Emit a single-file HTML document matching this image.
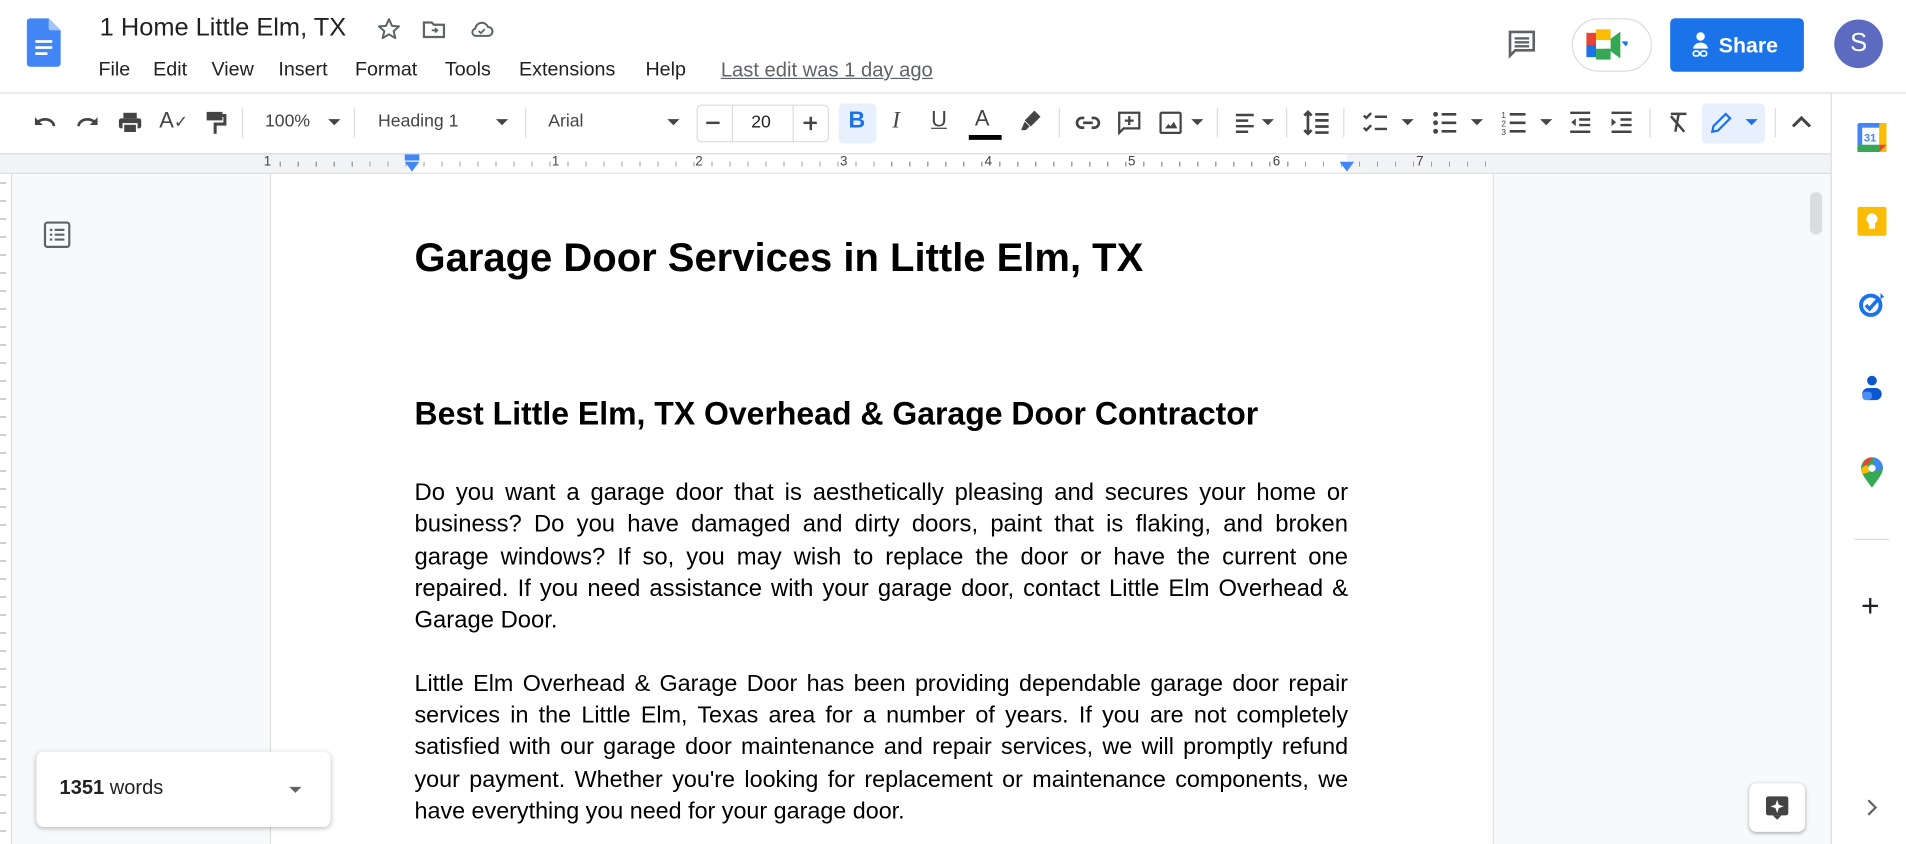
<!DOCTYPE html>
<html><head><meta charset="utf-8">
<style>
*{box-sizing:border-box;margin:0;padding:0}
html,body{width:1906px;height:844px;overflow:hidden;background:#fff}
#w{position:absolute;left:0;top:0;width:1568px;height:694px;transform:scale(1.21556,1.21614);transform-origin:0 0;font-family:"Liberation Sans",Arial,sans-serif;color:#202124;overflow:hidden}
.a{position:absolute}
.menu span{position:absolute;top:48px;font-size:16.2px;color:#202124}
.tb{position:absolute;top:77px;left:0;width:1506px;height:49px;background:#fff}
.ic{position:absolute;top:89px}
.sep{position:absolute;top:89px;width:1px;height:24px;background:#dadce0}
.car{position:absolute;top:98px;width:0;height:0;border-left:5px solid transparent;border-right:5px solid transparent;border-top:5px solid #444}
.tt{position:absolute;top:92px;font-size:14.5px;color:#444}
p.b{font-size:19.2px;line-height:26.3px;text-align:justify;color:#000}
</style></head><body><div id="w">
<!-- header -->
<svg class="a" style="left:22px;top:15px" width="28" height="40" viewBox="0 0 28 40"><path d="M3 0h15l10 10v27a3 3 0 0 1-3 3H3a3 3 0 0 1-3-3V3a3 3 0 0 1 3-3z" fill="#4285f4"/><path d="M18 0v8a2 2 0 0 0 2 2h8z" fill="#a1c2fa"/><rect x="7" y="18" width="14" height="2.2" fill="#fff"/><rect x="7" y="23" width="14" height="2.2" fill="#fff"/><rect x="7" y="28" width="10" height="2.2" fill="#fff"/></svg>
<div class="a" style="left:82px;top:11px;font-size:20.9px;color:#202124">1 Home Little Elm, TX</div>
<svg class="a" style="left:309px;top:13px" width="22" height="22" viewBox="0 0 24 24"><path d="M12 3l2.7 6 6.3.5-4.8 4.2 1.5 6.3L12 16.6 6.3 20l1.5-6.3L3 9.5 9.3 9z" fill="none" stroke="#5f6368" stroke-width="1.8" stroke-linejoin="round"/></svg>
<svg class="a" style="left:346px;top:13px" width="22" height="22" viewBox="0 0 24 24"><path d="M3 6h7l2 2h9v11H3z" fill="none" stroke="#5f6368" stroke-width="2"/><path d="M10 13h5m-2-2l2 2-2 2" stroke="#5f6368" stroke-width="1.6" fill="none"/></svg>
<svg class="a" style="left:385px;top:13px" width="22" height="22" viewBox="0 0 24 24"><path d="M7 18h11a4 4 0 0 0 0-8 6 6 0 0 0-11.5 1.5A3.3 3.3 0 0 0 7 18z" fill="none" stroke="#5f6368" stroke-width="1.8"/><path d="M9.5 13.5l2 2 3.5-3.5" fill="none" stroke="#5f6368" stroke-width="1.6"/></svg>
<div class="menu"><span style="left:81px">File</span><span style="left:126px">Edit</span><span style="left:174px">View</span><span style="left:229px">Insert</span><span style="left:292px">Format</span><span style="left:366px">Tools</span><span style="left:427px">Extensions</span><span style="left:531px">Help</span><span style="left:593px;color:#5f6368;text-decoration:underline;font-size:16.6px">Last edit was 1 day ago</span></div>
<svg class="a" style="left:1239px;top:23px" width="26" height="26" viewBox="0 0 24 24"><path d="M3 3h18v14H7l-4 4z" fill="none" stroke="#5f6368" stroke-width="2"/><rect x="6.5" y="7" width="11" height="1.8" fill="#5f6368"/><rect x="6.5" y="10" width="11" height="1.8" fill="#5f6368"/><rect x="6.5" y="13" width="11" height="1.8" fill="#5f6368"/></svg>
<div class="a" style="left:1293px;top:15px;width:66px;height:44px;border:1px solid #dadce0;border-radius:22px"></div>
<svg class="a" style="left:1305px;top:24px" width="34" height="26" viewBox="0 0 34 26"><rect x="0" y="3" width="8" height="10" fill="#ea4335"/><rect x="8" y="0" width="12" height="9" fill="#fbbc04"/><rect x="0" y="13" width="8" height="10" fill="#1a73e8"/><rect x="8" y="16" width="12" height="9" fill="#34a853"/><path d="M20 8l8-6v22l-8-6z" fill="#34a853"/><rect x="8" y="9" width="8" height="7" fill="#fff"/><path d="M29 10h7l-3.5 4z" fill="#1a73e8"/></svg>
<div class="a" style="left:1374px;top:15px;width:110px;height:44px;background:#1a73e8;border-radius:4px;color:#fff;font-size:17.5px;font-weight:bold;line-height:44px;padding-left:40px">Share</div>
<svg class="a" style="left:1391px;top:26px" width="16" height="22" viewBox="0 0 16 22"><circle cx="8" cy="4" r="3.5" fill="#fff"/><path d="M2 14a6 5 0 0 1 12 0z" fill="#fff"/><rect x="2" y="16" width="5" height="4" rx="2" fill="none" stroke="#fff" stroke-width="1.4"/><rect x="8" y="16" width="5" height="4" rx="2" fill="none" stroke="#fff" stroke-width="1.4"/></svg>
<div class="a" style="left:1509px;top:16px;width:40px;height:40px;border-radius:50%;background:#5c6bc0;color:#fff;font-size:21px;line-height:40px;text-align:center">S</div>
<div class="a" style="left:0;top:76px;width:1568px;height:1px;background:#dadce0"></div>
<!-- toolbar -->
<div class="tb"></div>
<svg class="ic" style="left:26px" width="22" height="24" viewBox="0 0 24 24"><path d="M5 12a8 6 0 0 1 15 3" fill="none" stroke="#444" stroke-width="2.4"/><path d="M3 7v7h7z" fill="#444"/></svg>
<svg class="ic" style="left:61px" width="22" height="24" viewBox="0 0 24 24"><path d="M19 12a8 6 0 0 0-15 3" fill="none" stroke="#444" stroke-width="2.4"/><path d="M21 7v7h-7z" fill="#444"/></svg>
<svg class="ic" style="left:96px" width="22" height="24" viewBox="0 0 24 24"><rect x="6" y="3" width="12" height="5" fill="#444"/><rect x="2" y="8" width="20" height="9" rx="2" fill="#444"/><rect x="6" y="13" width="12" height="8" fill="#444" stroke="#fff" stroke-width="1.5"/></svg>
<div class="tt" style="left:131px;top:89px;font-size:18px">A<span style="font-size:14px">✓</span></div>
<svg class="ic" style="left:167px" width="20" height="24" viewBox="0 0 20 24"><rect x="3" y="3" width="13" height="7" fill="#444"/><path d="M16 6h2v7h-8v8" fill="none" stroke="#444" stroke-width="2.5"/></svg>
<div class="sep" style="left:199px"></div>
<div class="tt" style="left:218px">100%</div><div class="car" style="left:270px"></div>
<div class="sep" style="left:291px"></div>
<div class="tt" style="left:311px">Heading 1</div><div class="car" style="left:408px"></div>
<div class="sep" style="left:432px"></div>
<div class="tt" style="left:451px">Arial</div><div class="car" style="left:549px"></div>
<div class="a" style="left:573px;top:86px;width:109px;height:31px;border:1px solid #dadce0;border-radius:4px"></div>
<div class="a" style="left:602px;top:86px;width:1px;height:31px;background:#dadce0"></div><div class="a" style="left:652px;top:86px;width:1px;height:31px;background:#dadce0"></div>
<div class="a" style="left:581px;top:100px;width:11px;height:2px;background:#444"></div>
<div class="tt" style="left:618px;top:93px;color:#202124">20</div>
<div class="a" style="left:661px;top:100px;width:11px;height:2px;background:#444"></div><div class="a" style="left:665.5px;top:95.5px;width:2px;height:11px;background:#444"></div>
<div class="a" style="left:690px;top:85px;width:31px;height:33px;background:#e8f0fe;border-radius:4px"></div>
<div class="a" style="left:698px;top:89px;font-size:19px;font-weight:bold;color:#1a73e8">B</div>
<div class="a" style="left:734px;top:89px;font-size:19px;font-style:italic;font-family:'Liberation Serif',serif;color:#444">I</div>
<div class="a" style="left:766px;top:88px;font-size:18px;color:#444;text-decoration:underline">U</div>
<div class="a" style="left:802px;top:87px;font-size:18px;color:#444">A</div>
<div class="a" style="left:797px;top:111px;width:27px;height:4px;background:#000"></div>
<svg class="ic" style="left:838px" width="20" height="22" viewBox="0 0 20 22"><path d="M13 2l5 5-8 8-5-5z" fill="#444"/><path d="M5 11l4 4-3 3H2z" fill="#444"/></svg>
<div class="sep" style="left:871px"></div>
<svg class="ic" style="left:883px" width="24" height="24" viewBox="0 0 24 24"><path d="M9 8H7a4 4 0 0 0 0 8h2M15 8h2a4 4 0 0 1 0 8h-2M8 12h8" fill="none" stroke="#444" stroke-width="2.2"/></svg>
<svg class="ic" style="left:918px" width="22" height="24" viewBox="0 0 24 24"><path d="M3 3h18v14H7l-4 4z" fill="none" stroke="#444" stroke-width="2"/><path d="M12 6v8M8 10h8" stroke="#444" stroke-width="2"/></svg>
<svg class="ic" style="left:952px" width="22" height="24" viewBox="0 0 24 24"><rect x="3" y="3" width="18" height="18" rx="1" fill="none" stroke="#444" stroke-width="2"/><path d="M7 17l3-4 2 2 3-4 3 6z" fill="#444"/></svg><div class="car" style="left:980px"></div>
<div class="sep" style="left:1001px"></div>
<svg class="ic" style="left:1014px" width="22" height="24" viewBox="0 0 24 24"><path d="M3 5h16M3 10h11M3 15h16M3 20h11" stroke="#444" stroke-width="2.2"/></svg><div class="car" style="left:1038px"></div>
<div class="sep" style="left:1058px"></div>
<svg class="ic" style="left:1071px" width="24" height="24" viewBox="0 0 24 24"><path d="M5 3v18M2 6l3-3 3 3M2 18l3 3 3-3M11 5h11M11 10h11M11 15h11M11 20h11" fill="none" stroke="#444" stroke-width="2.2"/></svg>
<div class="sep" style="left:1105px"></div>
<svg class="ic" style="left:1119px" width="24" height="24" viewBox="0 0 24 24"><path d="M3 6l2 2 4-4M3 16l2 2 4-4M12 7h10M12 17h10" fill="none" stroke="#444" stroke-width="2"/></svg><div class="car" style="left:1153px"></div>
<svg class="ic" style="left:1177px" width="24" height="24" viewBox="0 0 24 24"><circle cx="4" cy="5" r="2" fill="#444"/><circle cx="4" cy="12" r="2" fill="#444"/><circle cx="4" cy="19" r="2" fill="#444"/><path d="M9 5h12M9 12h12M9 19h12" stroke="#444" stroke-width="2.2"/></svg><div class="car" style="left:1210px"></div>
<svg class="ic" style="left:1234px" width="24" height="24" viewBox="0 0 24 24"><text x="1" y="8" font-size="7" fill="#444" font-family="Liberation Sans">1</text><text x="1" y="15" font-size="7" fill="#444" font-family="Liberation Sans">2</text><text x="1" y="22" font-size="7" fill="#444" font-family="Liberation Sans">3</text><path d="M8 5h13M8 12h13M8 19h13" stroke="#444" stroke-width="2.2"/></svg><div class="car" style="left:1267px"></div>
<svg class="ic" style="left:1289px" width="22" height="24" viewBox="0 0 24 24"><path d="M3 3h18M11 9h10M11 14h10M3 20h18" stroke="#444" stroke-width="2.2"/><path d="M8 8v7l-4-3.5z" fill="#444"/></svg>
<svg class="ic" style="left:1323px" width="22" height="24" viewBox="0 0 24 24"><path d="M3 3h18M11 9h10M11 14h10M3 20h18" stroke="#444" stroke-width="2.2"/><path d="M3 8v7l4-3.5z" fill="#444"/></svg>
<div class="sep" style="left:1357px"></div>
<svg class="ic" style="left:1370px" width="22" height="24" viewBox="0 0 24 24"><path d="M5 4h14M12 4l-3 16M5 6l12 14" stroke="#444" stroke-width="2.2" fill="none"/></svg>
<div class="a" style="left:1400px;top:85px;width:52px;height:33px;background:#e8f0fe;border-radius:4px"></div>
<svg class="ic" style="left:1405px" width="22" height="24" viewBox="0 0 24 24"><path d="M4 20l1-5L16 4l4 4L9 19z" fill="none" stroke="#1a73e8" stroke-width="2"/></svg>
<div class="car" style="left:1436px;border-top-color:#1a73e8"></div>
<div class="sep" style="left:1460px"></div>
<svg class="ic" style="left:1472px" width="20" height="24" viewBox="0 0 20 24"><path d="M3 15l7-7 7 7" fill="none" stroke="#444" stroke-width="2.5"/></svg>
<!-- ruler -->
<div class="a" style="left:0;top:126px;width:1506px;height:17px;background:#f1f3f4;border-top:1px solid #dadce0;border-bottom:1px solid #dadce0"></div>
<div class="a" style="left:339px;top:127px;width:769px;height:15px;background:#fff"></div>
<div class="a" style="left:0;top:127px;width:1506px;height:15px;font-size:11px;color:#444">
<span class="a" style="left:217px;top:0">1</span><span class="a" style="left:454px;top:0">1</span><span class="a" style="left:572px;top:0">2</span><span class="a" style="left:691px;top:0">3</span><span class="a" style="left:810px;top:0">4</span><span class="a" style="left:928px;top:0">5</span><span class="a" style="left:1047px;top:0">6</span><span class="a" style="left:1165px;top:0">7</span>
<div class="a" style="left:230px;top:6px;width:998px;height:4px;background:repeating-linear-gradient(90deg,#9aa0a6 0 1px,transparent 1px 14.8px)"></div>
</div>
<div class="a" style="left:333px;top:127px;width:12px;height:5px;background:#4285f4"></div>
<div class="a" style="left:333px;top:133px;border-left:6px solid transparent;border-right:6px solid transparent;border-top:8px solid #4285f4;width:0;height:0"></div>
<div class="a" style="left:1102px;top:133px;border-left:6px solid transparent;border-right:6px solid transparent;border-top:8px solid #4285f4;width:0;height:0"></div>
<!-- doc area -->
<div class="a" style="left:0;top:143px;width:1506px;height:551px;background:#f8f9fa"></div>
<div class="a" style="left:0;top:143px;width:10px;height:551px;background:#fff;border-right:1px solid #dadce0"></div>
<div class="a" style="left:0;top:150px;width:5px;height:540px;background:repeating-linear-gradient(180deg,#9aa0a6 0 1px,transparent 1px 14.8px)"></div>
<div class="a" style="left:222px;top:143px;width:1007px;height:551px;background:#fff;border-left:1px solid #e0e0e0;border-right:1px solid #e0e0e0"></div>
<svg class="a" style="left:35px;top:181px" width="24" height="24" viewBox="0 0 24 24"><rect x="2" y="2" width="20" height="20" rx="2" fill="none" stroke="#5f6368" stroke-width="1.8"/><path d="M6 8h2M10 8h8M6 12h2M10 12h8M6 16h2M10 16h8" stroke="#5f6368" stroke-width="1.8"/></svg>
<div class="a" style="left:1489px;top:158px;width:10px;height:35px;background:#dadce0;border-radius:5px"></div>
<div class="a" style="left:341px;top:193px;font-size:32.9px;font-weight:bold;color:#000;white-space:nowrap">Garage Door Services in Little Elm, TX</div>
<div class="a" style="left:341px;top:325px;font-size:26.3px;font-weight:bold;color:#000;white-space:nowrap">Best Little Elm, TX Overhead &amp; Garage Door Contractor</div>
<div class="a" style="left:341px;top:392px;width:768px">
<p class="b" style="font-size:19.6px">Do you want a garage door that is aesthetically pleasing and secures your home or business? Do you have damaged and dirty doors, paint that is flaking, and broken garage windows? If so, you may wish to replace the door or have the current one repaired. If you need assistance with your garage door, contact Little Elm Overhead &amp; Garage Door.</p>
<p class="b" style="margin-top:26.3px">Little Elm Overhead &amp; Garage Door has been providing dependable garage door repair services in the Little Elm, Texas area for a number of years. If you are not completely satisfied with our garage door maintenance and repair services, we will promptly refund your payment. Whether you're looking for replacement or maintenance components, we have everything you need for your garage door.</p>
</div>
<!-- word count -->
<div class="a" style="left:30px;top:618px;width:242px;height:62px;background:#fff;border-radius:6px;box-shadow:0 1px 4px rgba(0,0,0,.25)"></div>
<div class="a" style="left:49px;top:639px;font-size:16.5px;color:#202124"><b>1351</b> words</div>
<div class="car" style="left:238px;top:647px;border-top-color:#5f6368"></div>
<div class="a" style="left:1439px;top:644px;width:46px;height:40px;background:#fff;border-radius:6px;box-shadow:0 1px 3px rgba(0,0,0,.3)"></div>
<svg class="a" style="left:1451px;top:653px" width="22" height="22" viewBox="0 0 24 24"><rect x="2" y="2" width="20" height="17" rx="2" fill="#444"/><path d="M8 19l4 4 4-4z" fill="#444"/><path d="M12 5l1.5 4.5L18 11l-4.5 1.5L12 17l-1.5-4.5L6 11l4.5-1.5z" fill="#fff"/></svg>
<!-- side panel -->
<div class="a" style="left:1506px;top:77px;width:62px;height:617px;background:#fff;border-left:1px solid #dadce0"></div>
<svg class="a" style="left:1528px;top:101px" width="24" height="24" viewBox="0 0 24 24"><rect x="0" y="0" width="24" height="24" rx="2" fill="#4285f4"/><rect x="0" y="18" width="24" height="6" fill="#34a853"/><rect x="18" y="0" width="6" height="24" fill="#fbbc04"/><rect x="4" y="4" width="14" height="14" fill="#fff"/><path d="M18 24l6-6h-6z" fill="#ea4335"/><text x="5.5" y="15.5" font-size="9" font-weight="bold" fill="#4285f4" font-family="Liberation Sans">31</text></svg>
<svg class="a" style="left:1528px;top:170px" width="24" height="24" viewBox="0 0 24 24"><rect width="24" height="24" rx="2" fill="#fbbc04"/><circle cx="12" cy="10" r="4.5" fill="#fff"/><rect x="9.5" y="14" width="5" height="4" fill="#fff"/></svg>
<svg class="a" style="left:1528px;top:238px" width="24" height="24" viewBox="0 0 24 24"><circle cx="11" cy="13" r="8" fill="none" stroke="#1a73e8" stroke-width="3.2"/><path d="M7 13l3 3 8-9" fill="none" stroke="#1a73e8" stroke-width="3"/><path d="M19 3l3 3-3 2z" fill="#1a73e8"/></svg>
<svg class="a" style="left:1528px;top:307px" width="24" height="24" viewBox="0 0 24 24"><circle cx="12" cy="6" r="4" fill="#0b57d0"/><rect x="4" y="12" width="16" height="10" rx="5" fill="#0b57d0"/><rect x="4" y="15" width="8" height="7" rx="3" fill="#4c8df6"/></svg>
<svg class="a" style="left:1530px;top:376px" width="20" height="26" viewBox="0 0 20 26"><path d="M10 25C4 17 1 13 1 9a9 9 0 0 1 18 0c0 4-3 8-9 16z" fill="#34a853"/><path d="M3 4a9 9 0 0 1 8-4L3 10z" fill="#ea4335"/><path d="M1 9l5-3 2 6-6 2z" fill="#fbbc04"/><path d="M11 0a9 9 0 0 1 8 9l-6 3z" fill="#4285f4"/><circle cx="10" cy="9" r="3" fill="#fff"/></svg>
<div class="a" style="left:1526px;top:443px;width:28px;height:1px;background:#dadce0"></div>
<div class="a" style="left:1531px;top:485px;font-size:26px;color:#202124;line-height:26px">+</div>
<svg class="a" style="left:1532px;top:656px" width="16" height="16" viewBox="0 0 16 16"><path d="M5 2l6 6-6 6" fill="none" stroke="#5f6368" stroke-width="1.8"/></svg>
</div></body></html>
